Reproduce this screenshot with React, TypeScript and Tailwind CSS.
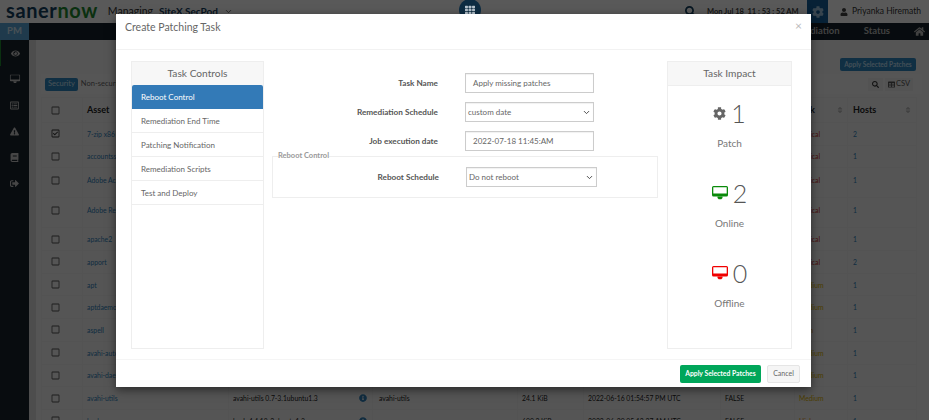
import { FaBook, FaCog, FaEye, FaExclamationTriangle, FaHome, FaInfoCircle, FaRegCheckSquare, FaRegListAlt, FaRegSquare, FaSearch, FaSignOutAlt, FaSort, FaTable, FaTh, FaUser } from "react-icons/fa";
import { ChevronDown } from "lucide-react";

const font = "[font-family:Lato,'Noto_Sans',sans-serif]";

const rows = [
  { asset: "7-zip x86", version: "7-zip 19.00", name: "7-zip", size: "1.3 MiB", date: "2022-06-16 01:54:57 PM UTC", reboot: "FALSE", sev: "Critical", hosts: 2, tall: false, checked: true },
  { asset: "accountsservice", version: "accountsservice 0.6.55", name: "accounts", size: "60.2 KiB", date: "2022-06-16 01:54:57 PM UTC", reboot: "FALSE", sev: "Critical", hosts: 1 },
  { asset: "Adobe Acrobat Reader", version: "22.001.20169", name: "Adobe", size: "180 MiB", date: "2022-06-16 01:54:57 PM UTC", reboot: "FALSE", sev: "Critical", hosts: 1, tall: true },
  { asset: "Adobe Reader", version: "22.001.20169", name: "Adobe", size: "180 MiB", date: "2022-06-16 01:54:57 PM UTC", reboot: "FALSE", sev: "Critical", hosts: 1, tall: true },
  { asset: "apache2", version: "apache2 2.4.41", name: "apache2", size: "94.1 KiB", date: "2022-06-16 01:54:57 PM UTC", reboot: "FALSE", sev: "Critical", hosts: 1 },
  { asset: "apport", version: "apport 2.20.11", name: "apport", size: "129 KiB", date: "2022-06-16 01:54:57 PM UTC", reboot: "FALSE", sev: "Critical", hosts: 2 },
  { asset: "apt", version: "apt 2.0.9", name: "apt", size: "1.3 MiB", date: "2022-06-16 01:54:57 PM UTC", reboot: "FALSE", sev: "Medium", hosts: 1 },
  { asset: "aptdaemon", version: "aptdaemon 1.1.1", name: "aptdaemon", size: "12.1 KiB", date: "2022-06-16 01:54:57 PM UTC", reboot: "FALSE", sev: "Medium", hosts: 1 },
  { asset: "aspell", version: "aspell 0.60.8", name: "aspell", size: "221 KiB", date: "2022-06-16 01:54:57 PM UTC", reboot: "FALSE", sev: "High", hosts: 1 },
  { asset: "avahi-autoipd", version: "avahi-autoipd 0.7", name: "avahi-autoipd", size: "24.1 KiB", date: "2022-06-16 01:54:57 PM UTC", reboot: "FALSE", sev: "Medium", hosts: 1 },
  { asset: "avahi-daemon", version: "avahi-daemon 0.7", name: "avahi-daemon", size: "24.1 KiB", date: "2022-06-16 01:54:57 PM UTC", reboot: "FALSE", sev: "Medium", hosts: 1 },
  { asset: "avahi-utils", version: "avahi-utils 0.7-3.1ubuntu1.3", name: "avahi-utils", size: "24.1 KiB", date: "2022-06-16 01:54:57 PM UTC", reboot: "FALSE", sev: "Medium", hosts: 1 },
  { asset: "bash", version: "bash 4.4.18-2ubuntu1.3", name: "gnu", size: "600.2 KiB", date: "2022-06-20 05:12:27 AM UTC", reboot: "FALSE", sev: "High", hosts: 1 },
];

const sevColor: Record<string, string> = {
  Critical: "text-[#c9302c]",
  Medium: "text-[#d8b000]",
  High: "text-[#e08a00]",
};

const Monitor = ({ color }: { color: string }) => (
  <svg width="16" height="14" viewBox="0 0 16 14" className={color} fill="currentColor">
    <path d="M1.5 0h13A1.5 1.5 0 0 1 16 1.5V9a1.5 1.5 0 0 1-1.500 1.500h-13A1.500 1.500 0 0 1 0 9V1.500A1.500 1.500 0 0 1 1.500 0Zm-.2 1.300V7.600h13.400V1.300Z" fillRule="evenodd" />
    <path d="M5.500 10.500h5v1.500l-1.200 1.200H6.700L5.500 12Z" />
  </svg>
);

const Field = ({ label, children }: { label: string; children: React.ReactNode }) => (
  <div className="flex items-center">
    <label className="w-[166px] text-right text-[8.200px] font-bold text-[#555]">{label}</label>
    <div className="ml-[27px]">{children}</div>
  </div>
);

const Box = ({ text, select, wide }: { text: string; select?: boolean; wide?: boolean }) => (
  <div className={`flex h-[20px] items-center justify-between border border-[#ccc] text-[8px] text-[#666] shadow-[inset_0_1px_1px_rgba(0,0,0,0.06)] ${wide ? "w-[131px]" : "w-[129px]"} ${select ? "pl-[2px] pr-[2px]" : "pl-[7px]"}`}>
    <span>{text}</span>
    {select && <ChevronDown size={9} strokeWidth={2.5} className="text-[#444]" />}
  </div>
);

const Stat = ({ icon, value, label, className }: { icon: React.ReactNode; value: number; label: string; className: string }) => (
  <div className={`flex flex-col items-center ${className}`}>
    <div className="flex h-[30px] items-center gap-[5px]">
      {icon}
      <span className="text-[25px] font-light leading-none text-[#555]">{value}</span>
    </div>
    <span className="mt-[8px] text-[10px] leading-[14px] text-[#777]">{label}</span>
  </div>
);

export default function App() {
  return (
    <div className={`relative h-[420px] w-full overflow-hidden bg-white ${font}`}>
      {/* page behind the modal */}
      <div className="flex h-[23px] items-center bg-white pl-[6px]">
        <span className="-mt-[3px] text-[20px] font-bold leading-none tracking-[0.6px] text-[#14405f]">saner</span>
        <span className="-mt-[3px] text-[20px] font-bold leading-none tracking-[0.6px] text-[#1d8a2e]">now</span>
        <span className="ml-[10px] text-[10.500px] text-[#333]">Managing</span>
        <span className="ml-[6px] text-[10px] font-bold text-[#14405f]">SiteX.SecPod</span>
        <ChevronDown size={9} className="ml-[6px] text-[#444]" />
        <div className="ml-auto flex h-full items-center">
          <FaSearch className="text-[11px] text-[#14405f]" />
          <span className="ml-[11px] w-[91px] whitespace-nowrap text-[7.500px] font-bold text-[#444]">Mon Jul 18&nbsp; 11 : 53 : 52 AM</span>
          <div className="ml-[9px] flex h-[23px] w-[21px] shrink-0 items-center justify-center bg-[#14609a]">
            <FaCog className="text-[12px] text-[#9ec4e0]" />
          </div>
          <FaUser className="ml-[12px] text-[8px] text-[#444]" />
          <span className="ml-[4px] w-[77px] whitespace-nowrap text-[8.500px] text-[#333]">Priyanka Hiremath</span>
        </div>
      </div>
      <div className="flex h-[17px] items-center bg-[#15222b] text-[9.500px] font-bold text-[#bbb]">
        <div className="flex h-full w-[29px] items-center justify-center bg-[#5aa6da] text-[#cfe6f5]">PM</div>
        <span className="ml-auto">Remediation</span>
        <span className="ml-[24px]">Status</span>
        <FaHome className="ml-[24px] mr-[4px] text-[11px]" />
      </div>
      <div className="flex h-[380px]">
        <div className="flex w-[29px] shrink-0 flex-col items-center bg-[#18232b] text-[#c8c8c8]">
          <div className="flex h-[26px] w-full items-center justify-center border-l border-[#1d8a2e]"><FaEye className="text-[9px]" /></div>
          <div className="flex h-[26px] items-center justify-center"><Monitor color="text-[#c8c8c8] scale-[0.65]" /></div>
          <div className="flex h-[26px] items-center justify-center"><FaRegListAlt className="text-[9px]" /></div>
          <div className="flex h-[26px] items-center justify-center"><FaExclamationTriangle className="text-[9px]" /></div>
          <div className="flex h-[26px] items-center justify-center"><FaBook className="text-[9px]" /></div>
          <div className="flex h-[26px] items-center justify-center"><FaSignOutAlt className="text-[9px]" /></div>
        </div>
        <div className="flex min-w-0 flex-1 flex-col border-l-[7px] border-[#ddd] bg-[#f4f4f4] pl-[5px] pr-[7px]">
          <div className="flex h-[34px] shrink-0 items-end justify-end pb-[3px] pr-[6px]">
            <div className="flex h-[13px] w-[76px] items-center justify-center whitespace-nowrap rounded-[2px] bg-[#2f86c1] text-[6.500px] font-bold text-[#bfe0f5]">Apply Selected Patches</div>
          </div>
          <div className="flex h-[20px] shrink-0 items-center bg-[#f7f7f7] pl-[4px] pr-[9px]">
            <div className="flex h-[13px] items-center rounded-[2px] bg-[#2f86c1] px-[3px] text-[7.500px] text-[#cfe6f5]">Security</div>
            <div className="flex h-[13px] items-center px-[3px] text-[7.500px] text-[#666]">Non-security</div>
            <div className="ml-auto flex h-[13px] w-[15px] items-center justify-center bg-[#eee]"><FaSearch className="text-[7px] text-[#333]" /></div>
            <div className="ml-[2px] flex h-[13px] items-center gap-[1px] bg-[#eee] px-[3px] text-[7.500px] text-[#555]"><FaTable className="text-[7px]" />CSV</div>
          </div>
          <table className="mt-[3px] w-[875px] table-fixed border-collapse text-[6.800px] text-[#222]">
            <colgroup>
              <col className="w-[41px]" /><col className="w-[146px]" /><col className="w-[144px]" /><col className="w-[145px]" /><col className="w-[66px]" /><col className="w-[137px]" /><col className="w-[74px]" /><col className="w-[53px]" /><col className="w-[69px]" />
            </colgroup>
            <thead>
              <tr className="h-[25px] text-[9px] font-bold">
                <th className="border border-[#eee] pl-[9px] font-normal"><FaRegSquare className="text-[9px] text-[#555]" /></th>
                <th className="border border-[#eee] pl-[4px] text-left">Asset</th>
                <th className="border border-[#eee]" />
                <th className="border border-[#eee]" />
                <th className="border border-[#eee]" />
                <th className="border border-[#eee]" />
                <th className="border border-[#eee]" />
                <th className="border border-[#eee] pl-[3px] pr-[3px] text-left">
                  <div className="flex items-center justify-between">Risk<FaSort className="text-[8px] text-[#bbb]" /></div>
                </th>
                <th className="border border-[#eee] pl-[5px] pr-[4px] text-left">
                  <div className="flex items-center justify-between">Hosts<FaSort className="text-[8px] text-[#bbb]" /></div>
                </th>
              </tr>
            </thead>
            <tbody>
              {rows.map((r) => (
                <tr key={r.asset} className={r.tall ? "h-[30px] align-top" : "h-[22.700px]"}>
                  <td className={`border border-[#eee] pl-[9px] ${r.tall ? "pt-[8px]" : ""}`}>
                    {r.checked ? <FaRegCheckSquare className="text-[9px] text-[#333]" /> : <FaRegSquare className="text-[9px] text-[#555]" />}
                  </td>
                  <td className={`truncate border border-[#eee] pl-[4px] text-[#2f7fb8] ${r.tall ? "pt-[7px]" : ""}`}>{r.asset}</td>
                  <td className={`border border-[#eee] pl-[4px] pr-[5px] ${r.tall ? "pt-[7px]" : ""}`}>
                    <div className="flex items-center justify-between">
                      <span className="truncate">{r.version}</span>
                      <FaInfoCircle className="shrink-0 text-[8px] text-[#2f7fb8]" />
                    </div>
                  </td>
                  <td className={`truncate border border-[#eee] pl-[6px] ${r.tall ? "pt-[7px]" : ""}`}>{r.name}</td>
                  <td className={`border border-[#eee] pl-[4px] ${r.tall ? "pt-[7px]" : ""}`}>{r.size}</td>
                  <td className={`truncate border border-[#eee] pl-[4px] ${r.tall ? "pt-[7px]" : ""}`}>{r.date}</td>
                  <td className={`border border-[#eee] pl-[4px] ${r.tall ? "pt-[7px]" : ""}`}>{r.reboot}</td>
                  <td className={`border border-[#eee] pl-[4px] ${sevColor[r.sev]} ${r.tall ? "pt-[7px]" : ""}`}>{r.sev}</td>
                  <td className={`border border-[#eee] pl-[5px] text-[#2f7fb8] ${r.tall ? "pt-[7px]" : ""}`}>{r.hosts}</td>
                </tr>
              ))}
            </tbody>
          </table>
        </div>
      </div>

      {/* backdrop */}
      <div className="absolute inset-0 bg-black/65" />
      <div className="absolute left-[459px] top-[-1px] flex h-[22px] w-[22px] items-center justify-center rounded-full bg-[#0e2c42]">
        <FaTh className="text-[10px] text-[#b5c2cc]" />
      </div>

      {/* modal */}
      <div className="absolute left-[116px] top-[14px] flex h-[373px] w-[695px] flex-col bg-white shadow-[0_3px_9px_rgba(0,0,0,0.5)]">
        <div className="flex h-[36px] shrink-0 items-start justify-between border-b border-[#f2f2f2] pl-[9px] pr-[9px] pt-[5px]">
          <h4 className="text-[10.500px] leading-[16px] text-[#666]">Create Patching Task</h4>
          <span className="-mt-[1px] text-[12px] leading-[16px] text-[#bbb]">×</span>
        </div>
        <div className="flex min-h-0 flex-1 gap-[8px] pl-[15px] pt-[11px]">
          <div className="h-[288px] w-[133px] shrink-0 border border-[#eee]">
            <div className="flex h-[23px] items-center justify-center bg-[#f7f7f7] text-[10.200px] text-[#666]">Task Controls</div>
            <div className="flex h-[24px] items-center rounded-t-[2px] bg-[#337ab7] pl-[9px] text-[8px] text-white">Reboot Control</div>
            {["Remediation End Time", "Patching Notification", "Remediation Scripts", "Test and Deploy"].map((item) => (
              <div key={item} className="flex h-[24px] items-center border-b border-[#eee] pl-[9px] text-[8px] text-[#666]">{item}</div>
            ))}
          </div>
          <div className="w-[386px] shrink-0 pt-[12px]">
            <div className="flex flex-col gap-[9px]">
              <Field label="Task Name"><Box text="Apply missing patches" /></Field>
              <Field label="Remediation Schedule"><Box text="custom date" select /></Field>
              <Field label="Job execution date"><Box text="2022-07-18 11:45:AM" /></Field>
            </div>
            <fieldset className="mt-[1px] h-[46px] border border-[#eee] pl-[5px]">
              <legend className="text-[7.500px] font-bold leading-[8px] text-[#999]">Reboot Control</legend>
              <div className="-ml-[5px] mt-[7px]">
                <Field label="Reboot Schedule"><Box text="Do not reboot" select wide /></Field>
              </div>
            </fieldset>
          </div>
          <div className="ml-[1px] h-[288px] w-[125px] shrink-0 border border-[#eee]">
            <div className="flex h-[24px] items-center justify-center border-b border-[#eee] bg-[#f7f7f7] text-[10.200px] text-[#666]">Task Impact</div>
            <Stat className="mt-[12px]" icon={<FaCog className="text-[13px] text-[#666]" />} value={1} label="Patch" />
            <Stat className="mt-[28px]" icon={<Monitor color="text-[#0a8a0a]" />} value={2} label="Online" />
            <Stat className="mt-[28px]" icon={<Monitor color="text-[#f00000]" />} value={0} label="Offline" />
          </div>
        </div>
        <div className="flex h-[28px] shrink-0 items-center justify-end gap-[6px] border-t border-[#f5f5f5] pr-[11px]">
          <button className="h-[18px] w-[81px] whitespace-nowrap rounded-[2px] bg-[#00a65a] text-[6.800px] font-bold text-white">Apply Selected Patches</button>
          <button className="h-[18px] w-[33px] rounded-[2px] border border-[#e5e5e5] bg-[#f5f5f5] text-[7px] text-[#666]">Cancel</button>
        </div>
      </div>
    </div>
  );
}
